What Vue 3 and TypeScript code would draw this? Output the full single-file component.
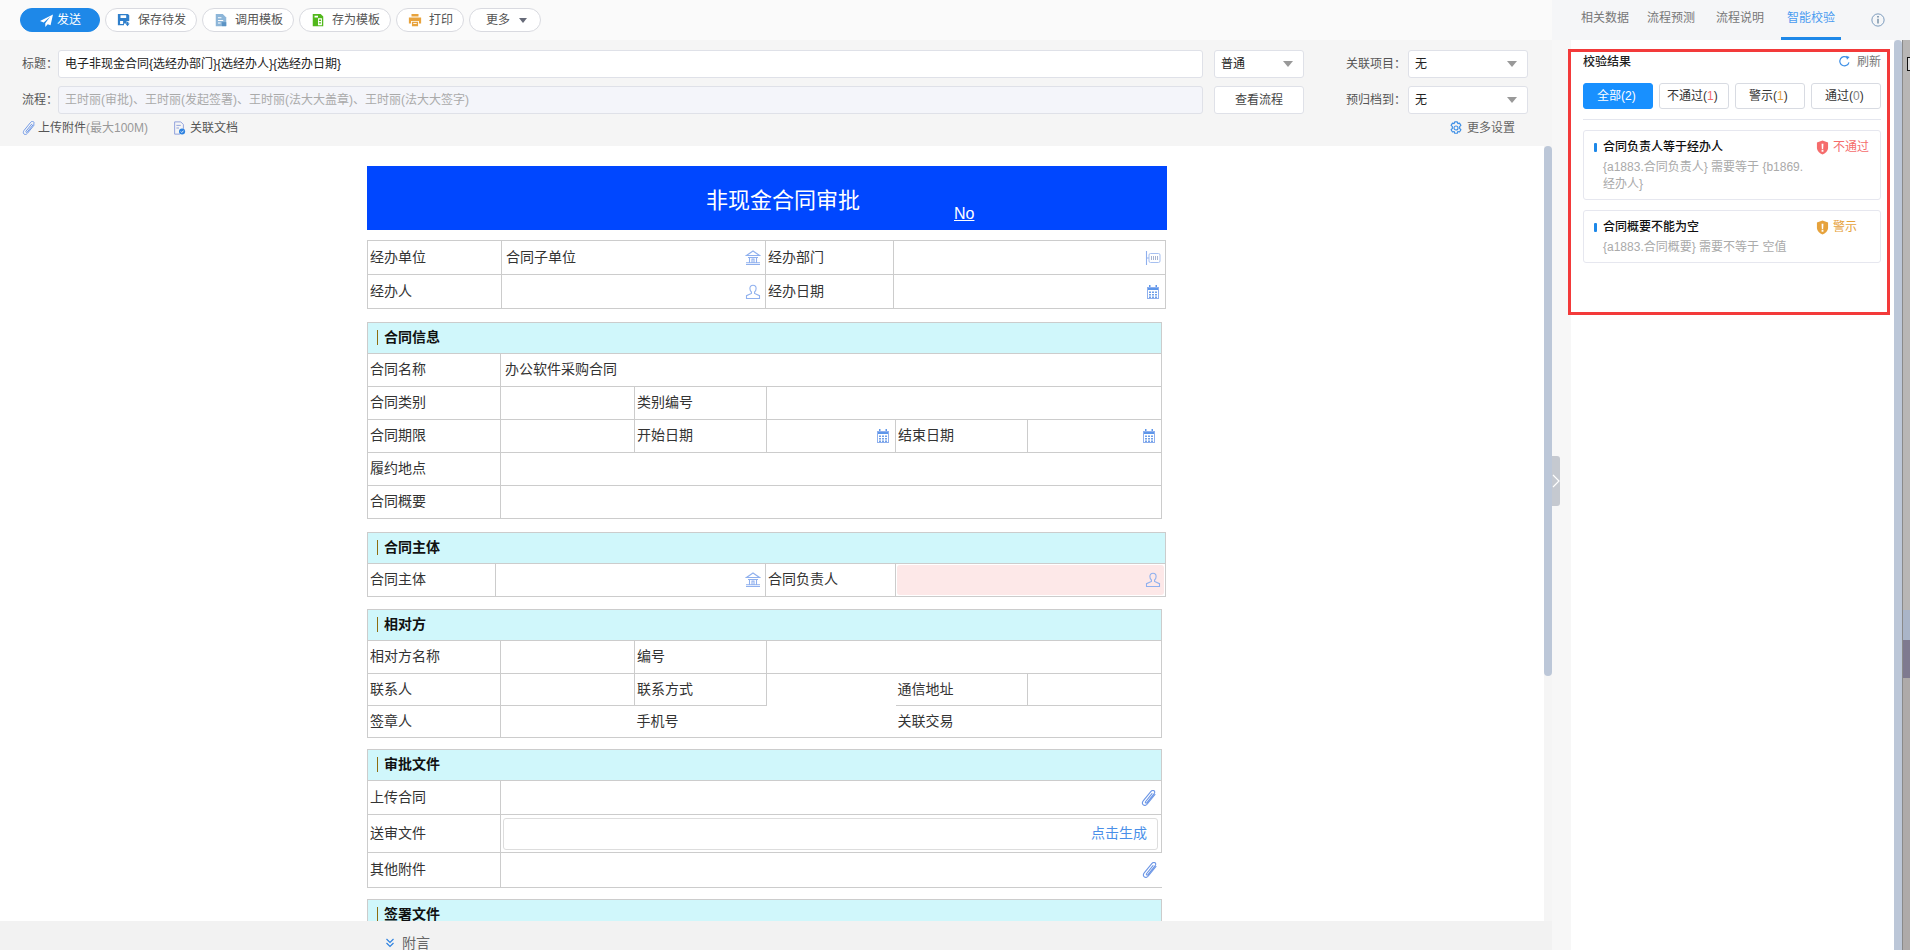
<script setup lang="ts">
import { ref } from 'vue'

interface Cell {
  text?: string
  span?: number
  kind?: 'label' | 'value'
  icon?: string
  cls?: string
  box?: string
}
interface Row { h: number; cells: Cell[] }
interface Section { title?: string; cols: number[]; rows: Row[]; wide?: boolean }

const l = (text: string, cls = ''): Cell => ({ text, kind: 'label', cls })
const v = (text = '', span = 1, icon = '', cls = ''): Cell => ({ text, kind: 'value', span, icon, cls })

const sixCols = [133, 134, 132, 129, 132, 134]

const sections: Section[] = [
  {
    cols: [134, 264, 128, 272],
    rows: [
      { h: 34, cells: [l('经办单位'), v('合同子单位', 1, 'i-bank'), l('经办部门'), v('', 1, 'i-dept')] },
      { h: 34, cells: [l('经办人'), v('', 1, 'i-user'), l('经办日期'), v('', 1, 'i-cal')] },
    ],
  },
  {
    title: '合同信息',
    cols: sixCols,
    rows: [
      { h: 33, cells: [l('合同名称'), v('办公软件采购合同', 5)] },
      { h: 33, cells: [l('合同类别'), v(), l('类别编号'), v('', 3)] },
      { h: 33, cells: [l('合同期限'), v(), l('开始日期'), v('', 1, 'i-cal'), l('结束日期'), v('', 1, 'i-cal')] },
      { h: 33, cells: [l('履约地点'), v('', 5)] },
      { h: 33, cells: [l('合同概要'), v('', 5)] },
    ],
  },
  {
    title: '合同主体',
    cols: [128, 270, 130, 270],
    rows: [
      { h: 33, cells: [l('合同主体'), v('', 1, 'i-bank'), l('合同负责人'), { kind: 'value', box: 'pink', icon: 'i-user' }] },
    ],
  },
  {
    title: '相对方',
    cols: sixCols,
    rows: [
      { h: 33, cells: [l('相对方名称'), v(), l('编号'), v('', 3)] },
      { h: 32, cells: [l('联系人'), v(), l('联系方式'), v('', 1, '', 'open'), l('通信地址'), v()] },
      { h: 32, cells: [l('签章人'), v('', 1, '', 'nr'), l('手机号', 'nr'), v('', 1, '', 'nr'), l('关联交易', 'nr'), v()] },
    ],
  },
  {
    title: '审批文件',
    cols: [133, 661],
    rows: [
      { h: 34, cells: [l('上传合同'), v('', 1, 'i-clip')] },
      { h: 38, cells: [l('送审文件'), { kind: 'value', box: 'gen', text: '点击生成' }] },
      { h: 35, cells: [l('其他附件'), v('', 1, 'i-clip', 'nr')] },
    ],
  },
  { title: '签署文件', cols: [133, 661], rows: [] },
]

const total = (cols: number[]) => cols.reduce((a, b) => a + b, 0)

const tools = [
  { name: '保存待发', icon: 'i-save' },
  { name: '调用模板', icon: 'i-tpl' },
  { name: '存为模板', icon: 'i-saveas' },
  { name: '打印', icon: 'i-print' },
]
const sideTabs = ['相关数据', '流程预测', '流程说明', '智能校验']
const filters = [
  { name: '全部', count: 2, cls: 'on' },
  { name: '不通过', count: 1, cls: 'red' },
  { name: '警示', count: 1, cls: 'orange' },
  { name: '通过', count: 0, cls: 'grey' },
]
const results = [
  { title: '合同负责人等于经办人', level: '不通过', cls: 'red', desc: '{a1883.合同负责人} 需要等于 {b1869.经办人}' },
  { title: '合同概要不能为空', level: '警示', cls: 'orange', desc: '{a1883.合同概要} 需要不等于 空值' },
]
const activeTab = ref(3)
</script>

<template>
  <svg class="defs">
    <symbol id="i-send" viewBox="0 0 16 16"><path fill="#fff" d="M16 .5 0 8.500l4.500 2 8-7-6 8V16l3-3.500 3.500 1.300z" /></symbol>
    <symbol id="i-save" viewBox="0 0 16 16"><path fill="#2f7fcb" fill-rule="evenodd" d="M1 1h11.500L14 2.500V9h-3v3H8v2H1zM4 2.500v3.200h6.500V2.500zM3.500 9v3.500H7V9z" /><path fill="#2f7fcb" d="M11 10h2v2h1.500L12 15l-2.500-3H11z" /></symbol>
    <symbol id="i-tpl" viewBox="0 0 16 16"><path fill="#8db6d9" d="M2 1h8l4 4v10H2z" /><path stroke="#fff" stroke-width="1.200" fill="none" d="M4.500 5.500h4M4.500 8.500h6M4.500 11.500h3" /><path fill="#5b93c4" d="M9 10.500h5V15H9z" /></symbol>
    <symbol id="i-saveas" viewBox="0 0 16 16"><path fill="#52b81c" d="M2 1h9l3 3v11H2z" /><path fill="#fff" d="M8 6h4.500v8H8zM4 3h4v2H4z" /><path fill="#52b81c" d="M9 7.500h2.500v1.500H9zM9 10.500h2.500V12H9z" /></symbol>
    <symbol id="i-print" viewBox="0 0 16 16"><path fill="#e8a33d" d="M4 1h8v3H4zM1 5h14v7h-2.500V9h-9v3H1zM4.500 10h7v5h-7z" /><path fill="#fff" d="M6 11.500h4v1H6z" /></symbol>
    <symbol id="i-clip" viewBox="0 0 16 16"><path fill="none" stroke="#6d97e6" stroke-width="1.100" stroke-linecap="round" d="M14 4.500 6.300 14c-1.200 1.500-2.900 1.800-4 .9s-1.100-2.700.1-4.200l7.600-9.300c.9-1.100 2.200-1.300 3.100-.6s.8 2-.1 3.100l-7 8.700c-.4.500-1 .6-1.400.3s-.3-.9.1-1.400l6.300-7.800" /></symbol>
    <symbol id="i-link" viewBox="0 0 16 16"><path fill="none" stroke="#8f9fdc" stroke-width="1.100" d="M3 1h7l3 3v5M9 15H3V1M5 5h5M5 8h3" /><circle cx="11.500" cy="12" r="3.500" fill="#2f83e0" /><path fill="none" stroke="#fff" d="m10 12 1.200 1.200 2-2.200" /></symbol>
    <symbol id="i-gear" viewBox="0 0 16 16"><path fill="none" stroke="#3d8fe6" stroke-width="1.300" stroke-linejoin="round" d="M6.500 1h3l.6 2 1.900-.6 1.600 2.600-1.500 1.500.1 1-.1 1 1.500 1.500-1.600 2.600-1.900-.6-.6 2h-3l-.6-2-1.900.6-1.600-2.600 1.500-1.500-.1-1 .1-1L2.400 5 4 2.400l1.900.6z" /><circle cx="8" cy="8" r="2.300" fill="none" stroke="#3d8fe6" stroke-width="1.300" /></symbol>
    <symbol id="i-bank" viewBox="0 0 16 16"><path fill="none" stroke="#8fb0ee" stroke-width="1.100" d="M8 1 1.500 5.500h13zM3 7.500h10M1 14.500h14M1 12.800h14M4.500 7.500v5.300M11.500 7.500v5.300M7 9h2v3.800H7z" /></symbol>
    <symbol id="i-user" viewBox="0 0 16 16"><path fill="none" stroke="#8fb0ee" stroke-width="1.100" d="M8 1.200c1.900 0 3.100 1.400 3.100 3.200 0 1.500-.6 2.700-1.500 3.500v1.500l4.900 2.300V14.500h-13v-2.800l4.900-2.300V7.900c-.9-.8-1.500-2-1.500-3.500 0-1.800 1.200-3.200 3.100-3.200z" /></symbol>
    <symbol id="i-dept" viewBox="0 0 16 16"><path stroke="#8fb0ee" stroke-width="1.100" d="M1.500 1v14M1.500 8H4" fill="none" /><rect x="4" y="3.500" width="11" height="9" rx="1.500" fill="none" stroke="#a7c0f0" /><path stroke="#a7b4d0" d="M6.500 6v4M8.500 6v4M10.500 6v4M12.500 6v4" /></symbol>
    <symbol id="i-cal" viewBox="0 0 16 16"><path fill="#5d96ea" d="M2 3h12v3H2z" /><path fill="#5d96ea" d="M4 1h1.500v3H4zM10.500 1H12v3h-1.500z" /><rect x="2.500" y="3.500" width="11" height="11" fill="none" stroke="#8fb0ee" /><path fill="#6f9fe8" d="M4 7.500h2v1.500H4zM7 7.500h2v1.500H7zM10 7.500h2v1.500h-2zM4 10h2v1.500H4zM7 10h2v1.500H7zM10 10h2v1.500h-2zM4 12.500h2V14H4zM7 12.500h2V14H7zM10 12.500h2V14h-2z" /></symbol>
    <symbol id="i-refresh" viewBox="0 0 16 16"><path fill="none" stroke="#3d8fe6" stroke-width="1.400" d="M13.500 9A5.700 5.700 0 1 1 11.500 3.200" /><path fill="#3d8fe6" d="M10 .8l4.300 1.700-3.300 3.200z" /></symbol>
    <symbol id="i-info" viewBox="0 0 16 16"><circle cx="8" cy="8" r="7" fill="none" stroke="#6b8fb5" /><path fill="#5f7c99" d="M7.200 3.500h1.600V5H7.200zM7.300 6.500h1.400V12H7.300z" /></symbol>
    <symbol id="i-shield" viewBox="0 0 14 16"><path fill="currentColor" d="M7 .5 13 2.500v5.800c0 3.600-3.100 6-6 7.200-2.900-1.200-6-3.600-6-7.200V2.500z" /><path fill="#fff" d="M6 4h2l-.3 5.500H6.300zM6 10.500h2v2H6z" /></symbol>
    <symbol id="i-down" viewBox="0 0 10 10"><path fill="none" stroke="#2f83e0" stroke-width="1.200" d="m1.500 1 3.500 3.500L8.500 1M1.500 5 5 8.500 8.500 5" /></symbol>
  </svg>

  <div class="page">
    <div class="main">
      <div class="toolbar">
        <button class="tool send">
          <svg class="ico"><use href="#i-send" /></svg>发送
        </button>
        <button v-for="t in tools" :key="t.name" class="tool">
          <svg class="ico"><use :href="'#' + t.icon" /></svg>{{ t.name }}
        </button>
        <button class="tool more">更多<i class="caret small"></i></button>
      </div>

      <div class="head">
        <div class="line">
          <span class="lab">标题：</span>
          <div class="inp grow">电子非现金合同{选经办部门}{选经办人}{选经办日期}</div>
          <div class="inp sel mid">普通<i class="caret"></i></div>
          <span class="lab rt">关联项目：</span>
          <div class="inp sel end">无<i class="caret"></i></div>
        </div>
        <div class="line">
          <span class="lab">流程：</span>
          <div class="inp grow off">王时丽(审批)、王时丽(发起签署)、王时丽(法大大盖章)、王时丽(法大大签字)</div>
          <div class="inp mid center">查看流程</div>
          <span class="lab rt">预归档到：</span>
          <div class="inp sel end">无<i class="caret"></i></div>
        </div>
        <div class="links">
          <span class="lk first"><svg class="ico"><use href="#i-clip" /></svg><span>上传附件<em>(最大100M)</em></span></span>
          <span class="lk second"><svg class="ico"><use href="#i-link" /></svg>关联文档</span>
          <span class="lk setting"><svg class="ico"><use href="#i-gear" /></svg>更多设置</span>
        </div>
      </div>

      <div class="body">
        <div class="sheet">
          <div class="banner">
            <span class="b-title">非现金合同审批</span>
            <span class="b-no">No</span>
          </div>
          <table
            v-for="(s, si) in sections"
            :key="si"
            class="tb"
            :style="{ width: total(s.cols) + 'px' }"
          >
            <colgroup>
              <col v-for="(c, ci) in s.cols" :key="ci" :style="{ width: c + 'px' }" />
            </colgroup>
            <tr v-if="s.title" class="sec-row">
              <th :colspan="s.cols.length"><i class="mark"></i>{{ s.title }}</th>
            </tr>
            <tr v-for="(r, ri) in s.rows" :key="ri" :style="{ height: r.h + 'px' }">
              <td
                v-for="(c, ci) in r.cells"
                :key="ci"
                :colspan="c.span || 1"
                :class="[c.kind, c.cls, c.box ? 'holder' : '']"
              >
                <div v-if="c.box" :class="c.box">
                  {{ c.text }}
                  <svg v-if="c.icon" class="ico"><use :href="'#' + c.icon" /></svg>
                </div>
                <div v-else class="cell">
                  <span>{{ c.text }}</span>
                  <svg v-if="c.icon" class="ico"><use :href="'#' + c.icon" /></svg>
                </div>
              </td>
            </tr>
          </table>
        </div>
        <div class="rail"><div class="thumb"></div></div>
      </div>

      <div class="foot">
        <svg class="down"><use href="#i-down" /></svg>附言
      </div>
      <div class="toggle">
        <svg viewBox="0 0 8 14" width="8" height="14"><path fill="none" stroke="#fff" stroke-width="1.200" d="m1 1 6 6-6 6" /></svg>
      </div>
    </div>

    <aside class="side">
      <div class="tabs">
        <span
          v-for="(t, i) in sideTabs"
          :key="t"
          class="tab"
          :class="{ active: i === activeTab }"
        >{{ t }}</span>
        <svg class="ico info"><use href="#i-info" /></svg>
      </div>
      <div class="side-body">
        <div class="gutter"></div>
        <div class="sheet-w">
          <div class="check">
            <div class="c-head">
              <b>校验结果</b>
              <span class="refresh"><svg class="ico s13"><use href="#i-refresh" /></svg>刷新</span>
            </div>
            <div class="filters">
              <div v-for="f in filters" :key="f.name" class="flt" :class="f.cls">
                {{ f.name }}(<span class="n">{{ f.count }}</span>)
              </div>
            </div>
            <div class="rule"></div>
            <div v-for="r in results" :key="r.title" class="card">
              <div class="c-title">
                <i class="tick"></i>
                <b>{{ r.title }}</b>
                <span class="level" :class="r.cls"><svg class="shield"><use href="#i-shield" /></svg>{{ r.level }}</span>
              </div>
              <div class="c-desc">{{ r.desc }}</div>
            </div>
          </div>
        </div>
        <div class="side-bar"></div>
        <div class="behind"><i class="box"></i></div>
      </div>
    </aside>
  </div>
</template>

<style>
html, body { margin: 0; overflow: hidden; background: #fff; }
</style>

<style scoped>
.defs { display: none; }
.page {
  display: flex;
  width: 1910px;
  height: 950px;
  overflow: hidden;
  font: 12px/1.4 "Liberation Sans", "Noto Sans CJK SC", sans-serif;
  color: #333;
}
.ico { width: 14px; height: 14px; flex: none; }
.s13 { width: 13px; height: 13px; }

.main {
  position: relative;
  width: 1552px;
  flex: none;
  display: flex;
  flex-direction: column;
}
.toolbar {
  height: 40px;
  box-sizing: border-box;
  padding: 8px 0 0 20px;
  display: flex;
  gap: 5px;
  background: #fafafa;
}
.tool {
  height: 24px;
  display: flex;
  align-items: center;
  gap: 7px;
  padding: 0 10px 0 11px;
  border: 1px solid #d9dae0;
  border-radius: 12px;
  background: #fff;
  font: inherit;
  color: #555;
}
.tool.send {
  background: #1e88e8;
  border-color: #1e88e8;
  color: #fff;
  padding: 0 18px 0 19px;
  gap: 4px;
}
.tool.send .ico { width: 13px; height: 13px; }
.tool.more { padding: 0 13px 0 16px; gap: 9px; }
.caret {
  margin-left: auto;
  width: 0;
  height: 0;
  border-left: 5.5px solid transparent;
  border-right: 5.5px solid transparent;
  border-top: 6px solid #999;
}
.caret.small {
  border-left-width: 4.5px;
  border-right-width: 4.5px;
  border-top: 5px solid #666a78;
}

.head {
  height: 106px;
  box-sizing: border-box;
  padding: 10px 24px 0 22px;
  background: #f5f5f5;
}
.line {
  display: flex;
  align-items: center;
  height: 28px;
  margin-bottom: 8px;
}
.lab { width: 36px; flex: none; color: #555; white-space: nowrap; }
.lab.rt { width: 62px; margin-left: 42px; }
.inp {
  height: 28px;
  box-sizing: border-box;
  display: flex;
  align-items: center;
  padding: 0 6px;
  background: #fff;
  border: 1px solid #dfe1e8;
  border-radius: 3px;
  color: #222;
  white-space: nowrap;
}
.grow { flex: 1; }
.mid { width: 90px; flex: none; margin-left: 11px; }
.end { width: 120px; flex: none; }
.sel { padding-right: 10px; }
.center { justify-content: center; color: #444; }
.off { background: #f4f5fa; color: #aaa; }
.links {
  display: flex;
  align-items: center;
  height: 16px;
  margin-top: -2px;
}
.lk { display: flex; align-items: center; gap: 4px; color: #555; }
.lk.first { gap: 2px; }
.lk em { font-style: normal; color: #999; }
.lk.second { margin-left: 24px; }
.lk.setting { margin-left: auto; margin-right: 13px; color: #666; }

.body {
  flex: 1;
  display: flex;
  min-height: 0;
  overflow: hidden;
  background: #fff;
}
.sheet {
  flex: 1;
  padding: 20px 0 0 367px;
  overflow: hidden;
  font-size: 14px;
}
.banner {
  position: relative;
  width: 800px;
  height: 64px;
  background: #0047ff;
  color: #fff;
  display: flex;
  justify-content: center;
  align-items: center;
  padding-left: 32px;
  box-sizing: border-box;
}
.b-title { font-size: 22px; line-height: 1.2; margin-top: 6px; }
.b-no {
  position: absolute;
  left: 587px;
  top: 37px;
  font-size: 16px;
  text-decoration: underline;
}
.tb {
  table-layout: fixed;
  border-collapse: collapse;
  margin-bottom: 13px;
  color: #333;
}
.banner + .tb { margin-top: 10px; }
.tb:nth-of-type(3) { margin-bottom: 12px; }
.tb:nth-of-type(n+4) { margin-bottom: 11px; }
.tb td, .tb th { border: 1px solid #ccc; padding: 0; }
.tb th {
  height: 30px;
  background: #d0f7fb;
  text-align: left;
  padding-left: 9px;
  color: #111;
  font-weight: 700;
}
.mark {
  display: inline-block;
  width: 1px;
  height: 15px;
  margin-right: 6px;
  vertical-align: -3px;
  background: #8f6d10;
}
.cell {
  display: flex;
  align-items: center;
  justify-content: space-between;
}
.cell .ico { width: 16px; height: 16px; }
.label .cell { padding: 0 2px; }
.value .cell { padding: 0 4px; min-height: 20px; }
.tb td.nr { border-right-style: hidden; }
.tb td.open { border-right-style: hidden; border-bottom-style: hidden; }
.tb td.holder { padding: 1px; }
.pink {
  height: 30px;
  box-sizing: border-box;
  display: flex;
  justify-content: flex-end;
  align-items: center;
  padding-right: 3px;
  border-radius: 3px;
  background: #fde8e8;
}
.pink .ico { width: 16px; height: 16px; }
.gen {
  height: 32px;
  box-sizing: border-box;
  margin: 0 2px 0 1px;
  display: flex;
  justify-content: flex-end;
  align-items: center;
  padding-right: 10px;
  border: 1px solid #ddd;
  border-radius: 3px;
  color: #4a8fe8;
}
.rail {
  width: 8px;
  flex: none;
  background: #f5f5f5;
}
.thumb {
  height: 530px;
  border-radius: 4px;
  background: #bcc7d8;
}
.foot {
  height: 29px;
  flex: none;
  display: flex;
  align-items: center;
  padding: 15px 0 0 385px;
  box-sizing: border-box;
  background: #f2f2f2;
  color: #666;
  font-size: 14px;
  line-height: 14px;
}
.down { width: 10px; height: 10px; margin-right: 7px; }
.toggle {
  position: absolute;
  left: 100%;
  top: 456px;
  z-index: 2;
  width: 8px;
  height: 50px;
  display: flex;
  align-items: center;
  justify-content: center;
  background: #c5c9d0;
  border-radius: 0 3px 3px 0;
}

.side {
  flex: 1;
  display: flex;
  flex-direction: column;
  background: #f5f6f8;
}
.tabs {
  height: 40px;
  flex: none;
  box-sizing: border-box;
  display: flex;
  padding-left: 23px;
}
.tab {
  width: 60px;
  text-align: center;
  line-height: 37px;
  color: #777;
  box-sizing: border-box;
  border-bottom: 3px solid transparent;
}
.tab:nth-child(1) { margin-right: 6px; }
.tab:nth-child(2) { margin-right: 9px; }
.tab:nth-child(3) { margin-right: 11px; }
.tab.active { color: #4a9bf0; border-color: #1e88e8; }
.info { margin: 13px 0 0 30px; }
.side-body { flex: 1; display: flex; min-height: 0; }
.gutter { width: 19px; flex: none; background: #f7f7f7; }
.sheet-w {
  width: 323px;
  flex: none;
  background: #fff;
  padding-top: 9px;
}
.check {
  position: relative;
  height: 266px;
  box-sizing: border-box;
  width: 322px;
  margin-left: -3px;
  padding: 0 6px 0 12px;
  border: 3px solid #f33a3a;
}
.c-head {
  height: 20px;
  display: flex;
  align-items: center;
  justify-content: space-between;
  color: #222;
}
.c-head b { font-weight: 500; }
.refresh { display: flex; align-items: center; gap: 6px; color: #777; }
.filters {
  display: flex;
  gap: 6px;
  margin: 11px 0 10px;
}
.flt {
  width: 70px;
  height: 26px;
  box-sizing: border-box;
  display: flex;
  align-items: center;
  justify-content: center;
  border: 1px solid #d8dbe2;
  border-radius: 3px;
  color: #333;
  white-space: pre;
}
.flt.on { background: #1890ff; border-color: #1890ff; color: #fff; }
.flt.red .n { color: #f56c6c; }
.flt.orange .n { color: #e6a23c; }
.flt.grey .n { color: #888; }
.rule { height: 1px; background: #e4e6ee; margin-bottom: 10px; }
.card {
  box-sizing: border-box;
  border: 1px solid #e6e7ef;
  border-radius: 3px;
  padding: 8px 0 6px 10px;
  margin-bottom: 10px;
}
.c-title {
  display: flex;
  align-items: center;
  height: 17px;
  color: #111;
}
.tick {
  width: 3px;
  height: 9px;
  margin-right: 6px;
  background: #1e88e8;
  border-radius: 1px;
}
.c-title b { flex: 1; font-weight: 500; }
.level {
  width: 64px;
  flex: none;
  display: flex;
  align-items: center;
  gap: 4px;
}
.level.red { color: #f56c6c; }
.level.orange { color: #e6a23c; }
.shield { width: 13px; height: 15px; flex: none; }
.c-desc {
  width: 204px;
  margin: 3px 0 0 9px;
  line-height: 17px;
  color: #aaa;
}
.side-bar {
  width: 8px;
  flex: none;
  background: #bcc7d8;
  border-radius: 4px 4px 0 0;
}
.behind {
  position: relative;
  flex: 1;
  border-left: 1px solid #8a8a8a;
  background: linear-gradient(#b8b6b5 0 570px, #aab5c8 570px 600px, #7f7a90 600px 638px, #aeaaa9 638px);
}
.box {
  position: absolute;
  left: 4px;
  top: 17px;
  width: 6px;
  height: 12px;
  border: 1px solid #111;
  background: #ddd;
}
</style>
